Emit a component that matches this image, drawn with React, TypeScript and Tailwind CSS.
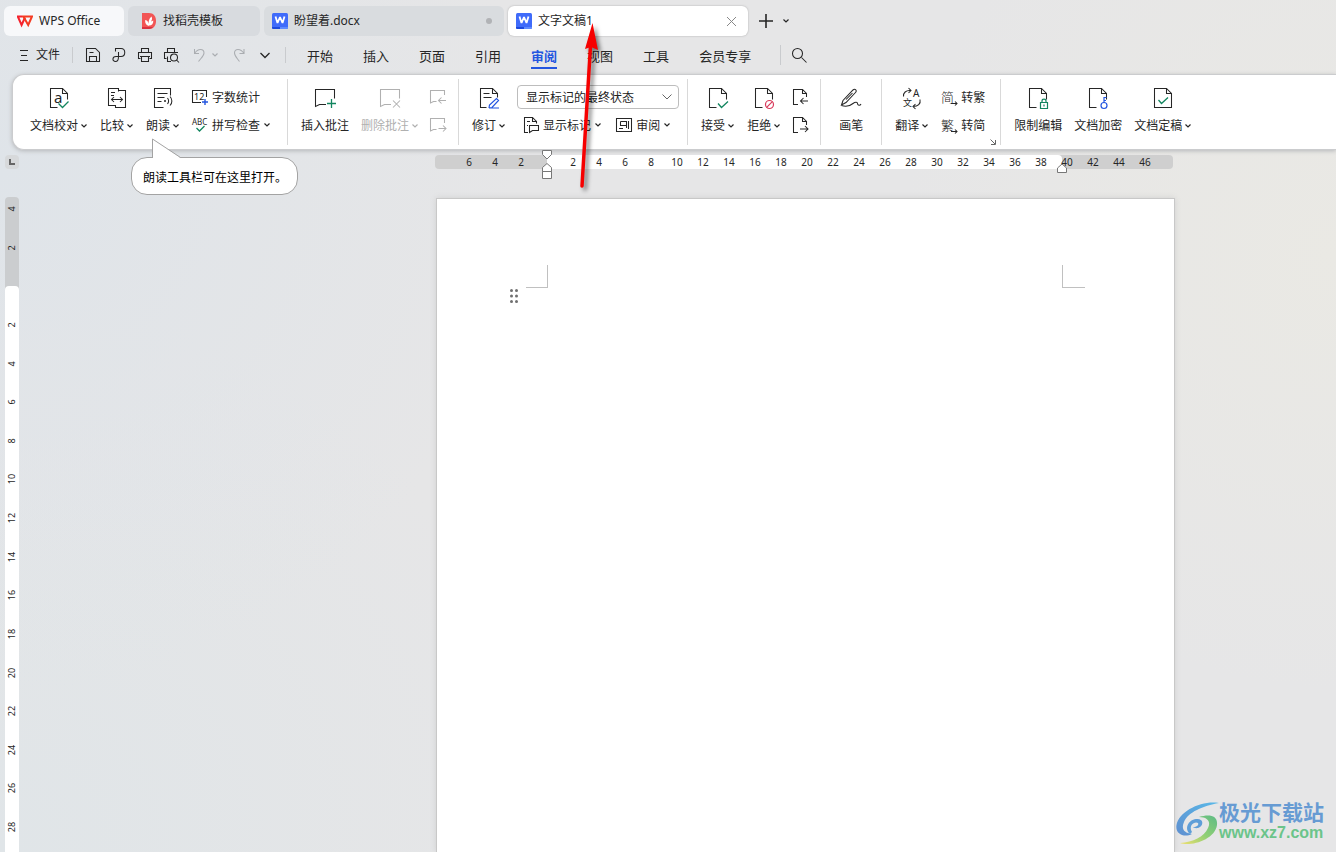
import { useState } from "react";
import type { ReactNode } from "react";

const MENU_TABS = ["开始", "插入", "页面", "引用", "审阅", "视图", "工具", "会员专享"];
const H_RULER = [6, 4, 2, 0, 2, 4, 6, 8, 10, 12, 14, 16, 18, 20, 22, 24, 26, 28, 30, 32, 34, 36, 38, 40, 42, 44, 46];
const V_RULER = [4, 2, 0, 2, 4, 6, 8, 10, 12, 14, 16, 18, 20, 22, 24, 26, 28];

const GREEN = "#12855f";
const BLUE = "#2355e0";
const RED = "#d8395a";

interface IconProps {
  size?: number;
  children: ReactNode;
}

function Icon({ size = 24, children }: IconProps) {
  return (
    <svg
      width={size}
      height={size}
      viewBox={`0 0 ${size} ${size}`}
      fill="none"
      stroke="currentColor"
      strokeWidth="1.05"
      className="shrink-0 overflow-visible"
      aria-hidden="true"
    >
      {children}
    </svg>
  );
}

function Caret() {
  return (
    <svg width="6" height="4" viewBox="0 0 6 4" fill="none" stroke="currentColor" strokeWidth="1.2" className="shrink-0" aria-hidden="true">
      <path d="M0.500 0.500L3 3L5.500 0.500" />
    </svg>
  );
}

/* page outline with a folded corner, open at the bottom right */
function DocOutline({ open = true }: { open?: boolean }) {
  return open ? (
    <path d="M10.5 21.500H3.5V2.5H15.5L20.5 7.5V13.5M15.5 2.5V7.5H20.5" />
  ) : (
    <path d="M3.5 2.5H15.5L20.5 7.5V21.500H3.5ZM15.5 2.5V7.5H20.5" />
  );
}

const icons = {
  proof: (
    <Icon>
      <DocOutline />
      <text x="7" y="17" fontSize="15" fill="currentColor" stroke="none" className="font-['Noto_Sans']">a</text>
      <path d="M11.5 17.5L15.5 21.5L21.5 15.5" stroke={GREEN} strokeWidth="1.3" />
    </Icon>
  ),
  compare: (
    <Icon>
      <path d="M13.5 5.5V2.5H3.5V19.5H10.5V21.5H20.5V4.5H13.5" />
      <path d="M6 6.5H10M6 9.5H9M6.5 13.5H17.5M9 11L6.5 13.5L9 16M15 11L17.5 13.5L15 16" />
    </Icon>
  ),
  read: (
    <Icon>
      <path d="M12.5 21.5H3.5V2.5H19.5V9.5M6.5 7.5H16.5M6.5 11.5H13.5M6.5 15.5H10.5" />
      <circle cx="14" cy="15" r="1" fill="currentColor" stroke="none" />
      <path d="M16.5 12C18 14 18 16 16.5 18M19 10.5C21.5 13 21.5 17 19 19.5" />
    </Icon>
  ),
  count: (
    <Icon size={16}>
      <path d="M9 13.5H0.5V1.5H14.5V8" />
      <text x="2" y="11" fontSize="9" fill="currentColor" stroke="none" className="font-['Noto_Sans']">12</text>
      <path d="M13 10V16M10 13H16" stroke={BLUE} strokeWidth="1.4" />
    </Icon>
  ),
  spell: (
    <Icon size={16}>
      <text x="0" y="8" fontSize="8" fill="currentColor" stroke="none" className="font-['Noto_Sans']">ABC</text>
      <path d="M4.5 11L7.5 14L12.5 9" stroke={GREEN} strokeWidth="1.3" />
    </Icon>
  ),
  insertComment: (
    <Icon>
      <path d="M13 18.5H6.5L2.5 20.5V3.5H21.5V12.5" />
      <path d="M18.5 13V22M14 17.5H23" stroke={GREEN} strokeWidth="1.3" />
    </Icon>
  ),
  deleteComment: (
    <Icon>
      <path d="M13 18.5H6.5L2.5 20.5V3.5H21.5V12.5M15 14.5L22 21.5M22 14.5L15 21.5" />
    </Icon>
  ),
  prevComment: (
    <Icon size={16}>
      <path d="M6.5 12.5H3.5L0.5 14V1.5H14.5V6M16 11.5H8.5M11.5 8.5L8.5 11.5L11.5 14.5" />
    </Icon>
  ),
  nextComment: (
    <Icon size={16}>
      <path d="M6.5 12.5H3.5L0.5 14V1.5H14.5V6M8.5 11.5H16M13 8.5L16 11.5L13 14.5" />
    </Icon>
  ),
  revise: (
    <Icon>
      <path d="M9.5 21.5H3.5V2.5H15.5L20.5 7.5V11.5M15.5 2.5V7.5H20.5M6.5 7.5H12.5M6.5 11.5H14.5" />
      <path d="M12 22L12.5 19L19.500 12.5L21.5 14.5L15 21.5L12 22H22" stroke={BLUE} strokeWidth="1.2" />
    </Icon>
  ),
  showMarkup: (
    <Icon size={16}>
      <path d="M5 15.5H1.5V0.5H9.5L13.5 4.5V6.5M9.5 0.5V4.5H13.5M4 4.5H7M4 8.5H5" />
      <path d="M6.5 15.5V8.5H15.5V13.5H9.5L6.5 15.5Z" />
    </Icon>
  ),
  reviewPane: (
    <Icon size={16}>
      <path d="M0.5 1.5H15.5V14.5H0.5ZM12.5 4V12M4.5 4.5H10.5V11M4.500 4.500V8.5H10.5M3 11.5H7" />
    </Icon>
  ),
  accept: (
    <Icon>
      <DocOutline />
      <path d="M12 17.5L15.5 21.5L22 15.5" stroke={GREEN} strokeWidth="1.3" />
    </Icon>
  ),
  reject: (
    <Icon>
      <DocOutline />
      <circle cx="17.5" cy="18.5" r="4" stroke={RED} strokeWidth="1.2" />
      <path d="M14.7 21.3L20.3 15.7" stroke={RED} strokeWidth="1.2" />
    </Icon>
  ),
  prevChange: (
    <Icon size={16}>
      <path d="M5 15.5H0.5V0.5H9.5L13.5 4.5V8M9.5 0.5V4.5H13.5M15 12H7.5M10.5 9L7.5 12L10.5 15" />
    </Icon>
  ),
  nextChange: (
    <Icon size={16}>
      <path d="M5 15.5H0.5V0.5H9.5L13.5 4.5V8M9.5 0.5V4.5H13.5M7 12H15M12 9L15 12L12 15" />
    </Icon>
  ),
  pen: (
    <Icon>
      <path d="M2.5 19L4 14.5L14 4C16 2.2 18.500 4.500 16.500 6.5L7 16.5L2.5 19ZM7 13.500L13.500 7" />
      <path d="M2.500 19.5C7 21 11 20 14 17.5C16.500 15.500 18.500 16 18.5 17.5C18.5 19.500 21 20 22 18" />
    </Icon>
  ),
  translate: (
    <Icon>
      <text x="13" y="11" fontSize="10" fill="currentColor" stroke="none" className="font-['Noto_Sans']">A</text>
      <text x="3" y="20" fontSize="9" fill="currentColor" stroke="none" className="font-['Noto_Sans_CJK_SC']">文</text>
      <path d="M3.500 10.500C3 7 6 4 10.500 4.500M8.5 2L11 4.500L8.500 7M20 13.500C21 18 18 20.500 13 20.5M15.5 18L13 20.5L15.5 23" />
    </Icon>
  ),
  toTrad: (
    <Icon size={16}>
      <text x="0" y="13" fontSize="13" fill="currentColor" stroke="none" className="font-['Noto_Sans_CJK_SC'] font-light">简</text>
      <path d="M10 14.500H16M14 12.500L16 14.500L14 16.500" />
    </Icon>
  ),
  toSimp: (
    <Icon size={16}>
      <text x="0" y="13" fontSize="13" fill="currentColor" stroke="none" className="font-['Noto_Sans_CJK_SC'] font-light">繁</text>
      <path d="M10 14.500H16M14 12.500L16 14.500L14 16.500" />
    </Icon>
  ),
  restrict: (
    <Icon>
      <DocOutline />
      <path d="M14.5 16.5H21.5V22.5H14.5ZM16 16.5V15C16 12.5 20 12.5 20 15V16.5M18 18.5V20.5" stroke={GREEN} strokeWidth="1.2" />
    </Icon>
  ),
  encrypt: (
    <Icon>
      <DocOutline />
      <circle cx="18" cy="19.5" r="3" stroke={BLUE} strokeWidth="1.2" />
      <path d="M18 16.500V11.5H20.500M18 14.500H20" stroke={BLUE} strokeWidth="1.2" />
    </Icon>
  ),
  finalize: (
    <Icon>
      <DocOutline open={false} />
      <path d="M7.5 14L10.5 17.5L17 11.5" stroke={GREEN} strokeWidth="1.3" />
    </Icon>
  ),
};

interface ToolProps {
  icon: ReactNode;
  label: string;
  menu?: boolean;
  disabled?: boolean;
}

function BigTool({ icon, label, menu, disabled }: ToolProps) {
  return (
    <button disabled={disabled} className="flex flex-col items-center gap-2 pt-[11px] disabled:text-[#b0b0b0]">
      {icon}
      <span className="flex h-4 items-center gap-[3px] whitespace-nowrap">
        {label}
        {menu && <Caret />}
      </span>
    </button>
  );
}

function SmallTool({ icon, label, menu }: ToolProps) {
  return (
    <button className="flex h-6 items-center gap-1 whitespace-nowrap">
      {icon}
      <span className="pt-px">{label}</span>
      {menu && <Caret />}
    </button>
  );
}

function IconTool({ icon, label, disabled }: ToolProps) {
  return (
    <button aria-label={label} disabled={disabled} className="flex h-6 items-center disabled:text-[#b0b0b0]">
      {icon}
    </button>
  );
}

function Stack({ children }: { children: ReactNode }) {
  return <div className="flex flex-col items-start gap-1 pt-[10px]">{children}</div>;
}

function Divider() {
  return <div className="mt-1 h-[66px] w-px shrink-0 bg-[#d9d9d9]" />;
}

function WriterLogo() {
  return (
    <svg width="16" height="16" viewBox="0 0 16 16" className="shrink-0" aria-hidden="true">
      <rect width="16" height="16" rx="1.5" fill="#3f6bfa" />
      <path d="M0 14H8V16H1.5Q0 16 0 14.5Z" fill="#1c49dc" />
      <path d="M8 14H16V14.5Q16 16 14.5 16H8Z" fill="#5f8bff" />
      <path d="M3.5 3.500L5.5 10L8 4L10.5 10L12.5 3.500" fill="none" stroke="#fff" strokeWidth="1.8" strokeLinejoin="bevel" />
    </svg>
  );
}

function TitleBar() {
  return (
    <header className="flex items-center gap-1 px-1 pt-[6px]">
      <button className="flex h-[30px] w-[120px] items-center gap-[6px] rounded-md bg-[#f7f8fa] pl-[13px]">
        <svg width="16" height="16" viewBox="0 0 16 16" fill="none" strokeWidth="2" aria-hidden="true">
          <path d="M5 3.5H0.8L4.6 12L8 4.5" stroke="#f5222d" />
          <path d="M5 3.5H15L11.2 12L6.4 3.5" stroke="#f43b22" />
        </svg>
        WPS Office
      </button>
      <button className="flex h-[30px] w-[132px] items-center gap-[6px] rounded-md bg-[#d8dbdf] pl-[13px]">
        <svg width="16" height="16" viewBox="0 0 16 16" aria-hidden="true">
          <path d="M1 0H8C12.5 0 15 3.5 15 8S12.5 16 8 16H1Z" fill="#f25555" />
          <path d="M1 14H12Q10.500 16 8 16H1Z" fill="#d93240" />
          <path d="M8 13C4.500 12 4 9.500 4.200 7C6.500 7.500 7.700 9 8 13ZM8 12.500C7 8 8.500 5 10.500 3.500C11.500 5.500 11 7 10 8.500L12.300 7.500C12.500 10.500 11 12.500 8 12.500Z" fill="#fff" />
        </svg>
        找稻壳模板
      </button>
      <div className="flex h-[30px] w-[240px] items-center justify-between rounded-md bg-[#d9dcdf] pr-3 pl-2">
        <button className="flex items-center gap-[6px]">
          <WriterLogo />
          盼望着.docx
        </button>
        <span className="h-[6px] w-[6px] rounded-full bg-[#b1b3b6]" />
      </div>
      <div className="flex h-[30px] w-[240px] items-center justify-between rounded-md bg-white pr-[11px] pl-2 shadow-[0_0_2px_#a8a8a8]">
        <button className="flex items-center gap-[6px]">
          <WriterLogo />
          文字文稿1
        </button>
        <button aria-label="关闭" className="text-[#888]">
          <svg width="11" height="11" viewBox="0 0 11 11" fill="none" stroke="currentColor" aria-hidden="true">
            <path d="M1 1L10 10M10 1L1 10" />
          </svg>
        </button>
      </div>
      <button aria-label="新建" className="ml-[6px]">
        <svg width="16" height="16" viewBox="0 0 16 16" fill="none" stroke="currentColor" strokeWidth="1.6" aria-hidden="true">
          <path d="M8 1V15M1 8H15" />
        </svg>
      </button>
      <button aria-label="标签列表" className="p-[5px]">
        <Caret />
      </button>
    </header>
  );
}

function QuickButton({ label, faded, children }: { label: string; faded?: boolean; children: ReactNode }) {
  return (
    <button aria-label={label} disabled={faded} className="flex w-[26px] justify-center disabled:text-[#aaadb1]">
      <Icon size={16}>{children}</Icon>
    </button>
  );
}

function MenuBar() {
  const [active, setActive] = useState("审阅");

  return (
    <nav className="flex h-[38px] items-center pl-[19px]">
      <button className="flex items-center gap-[7px]">
        <svg width="10" height="12" viewBox="0 0 10 12" fill="none" stroke="currentColor" aria-hidden="true">
          <path d="M1 1.5H9M2 6.500H8M1 11.500H9" />
        </svg>
        文件
      </button>
      <div className="ml-3 h-4 w-px bg-[#c9cbce]" />
      <div className="ml-[7px] flex items-center">
        <QuickButton label="保存">
          <path d="M1.500 1.500H10.500L14.500 5.500V14.500H1.500ZM4.500 14.500V9.500H11.500V14.500M4.500 5.500H8.500" />
        </QuickButton>
        <QuickButton label="输出为PDF">
          <path d="M4.500 4.500V1.500H10C15 1.500 15 9.500 10 9.500H5C1 9.500 1 14.500 4.500 14.500C6.500 14.500 7.500 13 7.500 9.500V5" />
        </QuickButton>
        <QuickButton label="打印">
          <path d="M3.500 11.500H1.500V5.500H14.500V11.500H12.500M4.500 5.500V1.500H11.500V5.500M4.500 9.500V14.500H11.500V9.500ZM3 9.500H13" />
        </QuickButton>
        <QuickButton label="打印预览">
          <path d="M3.500 11.500H1.500V5.500H15M4.500 5.500V1.500H11.500V5.500M4.500 9.500V14.500H8" />
          <circle cx="11" cy="10.500" r="3.500" />
          <path d="M13.500 13L16 15.500" />
        </QuickButton>
        <div className="ml-[2px] flex items-center text-[#aaadb1]">
          <QuickButton label="撤销" faded>
            <path d="M3.500 2V6.500H8M3.500 6.500C7 1 13 1.500 13 6C13 9 10 11 7.500 14.500" />
          </QuickButton>
          <Caret />
        </div>
        <div className="ml-2 flex items-center">
          <QuickButton label="恢复" faded>
            <path d="M13 2V6.500H8.500M13 6.500C9.500 1 3.500 1.500 3.500 6C3.500 9 6 11 8.500 14.500" />
          </QuickButton>
          <QuickButton label="更多">
            <path d="M3.500 6L8 10.500L12.500 6" strokeWidth="1.300" />
          </QuickButton>
        </div>
      </div>
      <div className="ml-[7px] h-4 w-px bg-[#c9cbce]" />
      <div className="ml-[6px] flex pt-px text-[13px]">
        {MENU_TABS.map((tab) => (
          <button
            key={tab}
            onClick={() => setActive(tab)}
            className={tab === active ? "px-[15px] font-bold text-[#2355e0]" : "px-[15px]"}
          >
            <span className={tab === active ? "block h-[26px] border-b-2 border-[#2355e0] leading-[26px]" : "block h-[26px] border-b-2 border-transparent leading-[26px]"}>
              {tab}
            </span>
          </button>
        ))}
      </div>
      <div className="ml-[14px] h-5 w-px bg-[#c9cbce]" />
      <button aria-label="搜索" className="ml-[10px]">
        <Icon size={16}>
          <circle cx="6.500" cy="6.500" r="5" />
          <path d="M10.500 10.500L15.500 15.500" />
        </Icon>
      </button>
    </nav>
  );
}

function Ribbon() {
  return (
    <section className="ml-3 flex h-[76px] items-start rounded-l-xl border border-r-0 border-[#cbccce] bg-white shadow-[0_1px_4px_#b4b6b9]">
      <div className="flex gap-[13px] px-[17px]">
        <BigTool icon={icons.proof} label="文档校对" menu />
        <BigTool icon={icons.compare} label="比较" menu />
        <BigTool icon={icons.read} label="朗读" menu />
        <Stack>
          <SmallTool icon={icons.count} label="字数统计" />
          <SmallTool icon={icons.spell} label="拼写检查" menu />
        </Stack>
      </div>
      <Divider />
      <div className="flex gap-3 pr-3 pl-[13px]">
        <BigTool icon={icons.insertComment} label="插入批注" />
        <BigTool icon={icons.deleteComment} label="删除批注" menu disabled />
        <Stack>
          <IconTool icon={icons.prevComment} label="上一条批注" disabled />
          <IconTool icon={icons.nextComment} label="下一条批注" disabled />
        </Stack>
      </div>
      <Divider />
      <div className="flex gap-3 pr-2 pl-[13px]">
        <BigTool icon={icons.revise} label="修订" menu />
        <Stack>
          <div className="relative">
            <select
              aria-label="标记状态"
              className="block h-6 w-[162px] appearance-none rounded border border-[#bdbdbd] bg-white pt-px pl-2 text-[#222]"
            >
              <option>显示标记的最终状态</option>
              <option>最终状态</option>
              <option>显示标记的原始状态</option>
              <option>原始状态</option>
            </select>
            <svg width="10" height="6" viewBox="0 0 10 6" fill="none" stroke="#666" className="pointer-events-none absolute top-[9px] right-[7px]" aria-hidden="true">
              <path d="M0.500 0.500L5 5L9.500 0.500" />
            </svg>
          </div>
          <div className="flex gap-[15px] pl-[6px]">
            <SmallTool icon={icons.showMarkup} label="显示标记" menu />
            <SmallTool icon={icons.reviewPane} label="审阅" menu />
          </div>
        </Stack>
      </div>
      <Divider />
      <div className="flex gap-[13px] pr-[11px] pl-[13px]">
        <BigTool icon={icons.accept} label="接受" menu />
        <BigTool icon={icons.reject} label="拒绝" menu />
        <Stack>
          <IconTool icon={icons.prevChange} label="上一条修订" />
          <IconTool icon={icons.nextChange} label="下一条修订" />
        </Stack>
      </div>
      <Divider />
      <div className="flex px-[18px]">
        <BigTool icon={icons.pen} label="画笔" />
      </div>
      <Divider />
      <div className="relative flex h-full gap-[13px] pr-[15px] pl-[13px]">
        <BigTool icon={icons.translate} label="翻译" menu />
        <Stack>
          <SmallTool icon={icons.toTrad} label="转繁" />
          <SmallTool icon={icons.toSimp} label="转简" />
        </Stack>
        <button aria-label="更多设置" className="absolute right-1 bottom-1 text-[#666]">
          <svg width="6" height="6" viewBox="0 0 6 6" fill="none" stroke="currentColor" aria-hidden="true">
            <path d="M0.500 0.500L5 5M5.500 1V5.500H1" />
          </svg>
        </button>
      </div>
      <Divider />
      <div className="flex gap-3 pl-[13px]">
        <BigTool icon={icons.restrict} label="限制编辑" />
        <BigTool icon={icons.encrypt} label="文档加密" />
        <BigTool icon={icons.finalize} label="文档定稿" menu />
      </div>
    </section>
  );
}

function HorizontalRuler() {
  return (
    <div className="relative grid h-[14px] w-[738px] text-[10px]">
      <div className="flex overflow-hidden rounded bg-[#cfcfcf] [grid-area:1/1]">
        <div className="w-[112px]" />
        <div className="w-[515px] rounded-r bg-white" />
      </div>
      <div className="flex pl-[21px] [grid-area:1/1]">
        {H_RULER.map((n, i) => (
          <span key={i} className="w-[26px] text-center leading-[14px]">
            {n || ""}
          </span>
        ))}
      </div>
      <svg width="12" height="30" viewBox="0 0 12 30" fill="#fff" stroke="#777" className="absolute -top-[6px] left-[106px]" aria-hidden="true">
        <path d="M1.500 1.500H10.500V5.500L6 10L1.500 5.500ZM6 14.500L10.500 18.500V22.500H1.500V18.500ZM1.500 22.500H10.500V29.500H1.500Z" />
      </svg>
      <svg width="12" height="12" viewBox="0 0 12 12" fill="#fff" stroke="#777" className="absolute top-[8px] left-[621px]" aria-hidden="true">
        <path d="M6 1L10.500 5V9.500H1.500V5Z" />
      </svg>
    </div>
  );
}

function VerticalRuler() {
  return (
    <div className="grid w-[14px] flex-1 overflow-hidden rounded-t bg-[#cbcdcf] text-[9px]">
      <div className="mt-[89px] rounded-t bg-white [grid-area:1/1]" />
      <div className="flex flex-col items-center justify-between pt-[5px] pb-[18px] [grid-area:1/1]">
        {V_RULER.map((n, i) => (
          <span key={i} className="h-[14px] -rotate-90 leading-[14px]">
            {n || ""}
          </span>
        ))}
      </div>
    </div>
  );
}

function Page() {
  return (
    <article className="mx-px flex-1 border border-b-0 border-[#c8c8c8] bg-white pt-[66px] shadow-[0_0_6px_#cfcfcf]">
      <div className="flex justify-between px-[89px]">
        <div className="h-[23px] w-[22px] border-r border-b border-[#c0c0c0]" />
        <div className="h-[23px] w-[23px] border-b border-l border-[#c0c0c0]" />
      </div>
      <button aria-label="段落柄" className="mt-px ml-[73px] block">
        <svg width="9" height="14" viewBox="0 0 9 14" fill="#707070" aria-hidden="true">
          <circle cx="1.500" cy="1.500" r="1.500" />
          <circle cx="6.500" cy="1.500" r="1.500" />
          <circle cx="1.500" cy="7" r="1.500" />
          <circle cx="6.500" cy="7" r="1.500" />
          <circle cx="1.500" cy="12.500" r="1.500" />
          <circle cx="6.500" cy="12.500" r="1.500" />
        </svg>
      </button>
    </article>
  );
}

function ReadAloudTip() {
  return (
    <div role="tooltip" className="absolute top-[157px] left-[131px] flex h-[38px] w-[167px] items-center rounded-2xl border border-[#a3a3a3] bg-white pt-1 pl-[11px] text-black">
      朗读工具栏可在这里打开。
      <svg width="32" height="21" viewBox="0 0 32 21" className="absolute -top-[20px] left-[19px]" aria-hidden="true">
        <path d="M1.500 21V1L29.500 20V21Z" fill="#fff" />
        <path d="M1.500 20V1L29.500 19.500" fill="none" stroke="#a3a3a3" />
      </svg>
    </div>
  );
}

function PointerArrow() {
  return (
    <svg width="40" height="180" viewBox="0 0 40 180" className="pointer-events-none absolute top-[16px] left-[570px] drop-shadow-[3px_3px_2px_rgba(0,0,0,0.5)]" aria-hidden="true">
      <path d="M12 170L20.500 30" stroke="#f60000" strokeWidth="3.500" strokeLinecap="round" />
      <path d="M22.500 7L28 34L21 31L15 33Z" fill="#f60000" />
    </svg>
  );
}

function Watermark() {
  return (
    <div className="pointer-events-none absolute right-[10px] bottom-[6px] flex items-center">
      <svg width="43" height="44" viewBox="0 0 43 44" aria-hidden="true">
        <defs>
          <linearGradient id="swoosh" x1="0" y1="1" x2="1" y2="0">
            <stop offset="0" stopColor="#5f8fd0" />
            <stop offset="1" stopColor="#5ab9e8" />
          </linearGradient>
          <linearGradient id="leaf" x1="0" y1="1" x2="1" y2="0">
            <stop offset="0" stopColor="#f0e070" />
            <stop offset="0.500" stopColor="#8fcf74" />
            <stop offset="1" stopColor="#5dbb86" />
          </linearGradient>
        </defs>
        <path d="M43 2C26 -1 3 10 0.500 24C-1 33 8 37 16 33C8 32 5 28 8 21C12 11 27 5 43 2Z" fill="url(#swoosh)" />
        <path d="M14 33C8 28 12 19 20 18C27 17 28 23 24 26C21 28 18 27 17 26C21 26 23 24 22 22C19 20 12 24 16 31Z" fill="#5f9ed8" />
        <path d="M4 42C14 46 39 39 41 24C42 14 33 13 23 16C32 16 35 21 32 27C28 36 17 41 4 42Z" fill="url(#leaf)" />
      </svg>
      <div className="w-[107px] pb-1">
        <p className="text-[21px] leading-6 font-bold text-[#679bd3]">极光下载站</p>
        <p className="font-['Liberation_Sans'] text-[16px] leading-[18px] font-bold text-[#6bc48a]">www.xz7.com</p>
      </div>
    </div>
  );
}

export default function App() {
  return (
    <div className="relative flex min-h-screen flex-col overflow-hidden bg-[#e6e6e7] bg-[radial-gradient(circle_at_0%_20%,#dfe4e9_0%,transparent_35%),radial-gradient(circle_at_0%_100%,#e0e5e8_0%,transparent_35%),radial-gradient(circle_at_100%_30%,#eae9e4_0%,transparent_30%)] font-['Noto_Sans','Noto_Sans_CJK_SC',sans-serif] text-[12px] leading-4 text-[#262626]">
      <TitleBar />
      <MenuBar />
      <Ribbon />
      <main className="flex flex-1 pt-[5px]">
        <aside className="flex w-[275px] shrink-0 flex-col pl-[5px]">
          <button aria-label="制表符" className="mb-[28px] flex h-[14px] w-[14px] items-center justify-center rounded-sm bg-[#d7d9db]">
            <svg width="6" height="6" viewBox="0 0 6 6" fill="none" stroke="#666" strokeWidth="2" aria-hidden="true">
              <path d="M1 0V5H6" />
            </svg>
          </button>
          <VerticalRuler />
        </aside>
        <div className="flex flex-1 justify-center">
          <div className="flex w-[741px] flex-col gap-[29px]">
            <HorizontalRuler />
            <Page />
          </div>
        </div>
      </main>
      <ReadAloudTip />
      <PointerArrow />
      <Watermark />
    </div>
  );
}
